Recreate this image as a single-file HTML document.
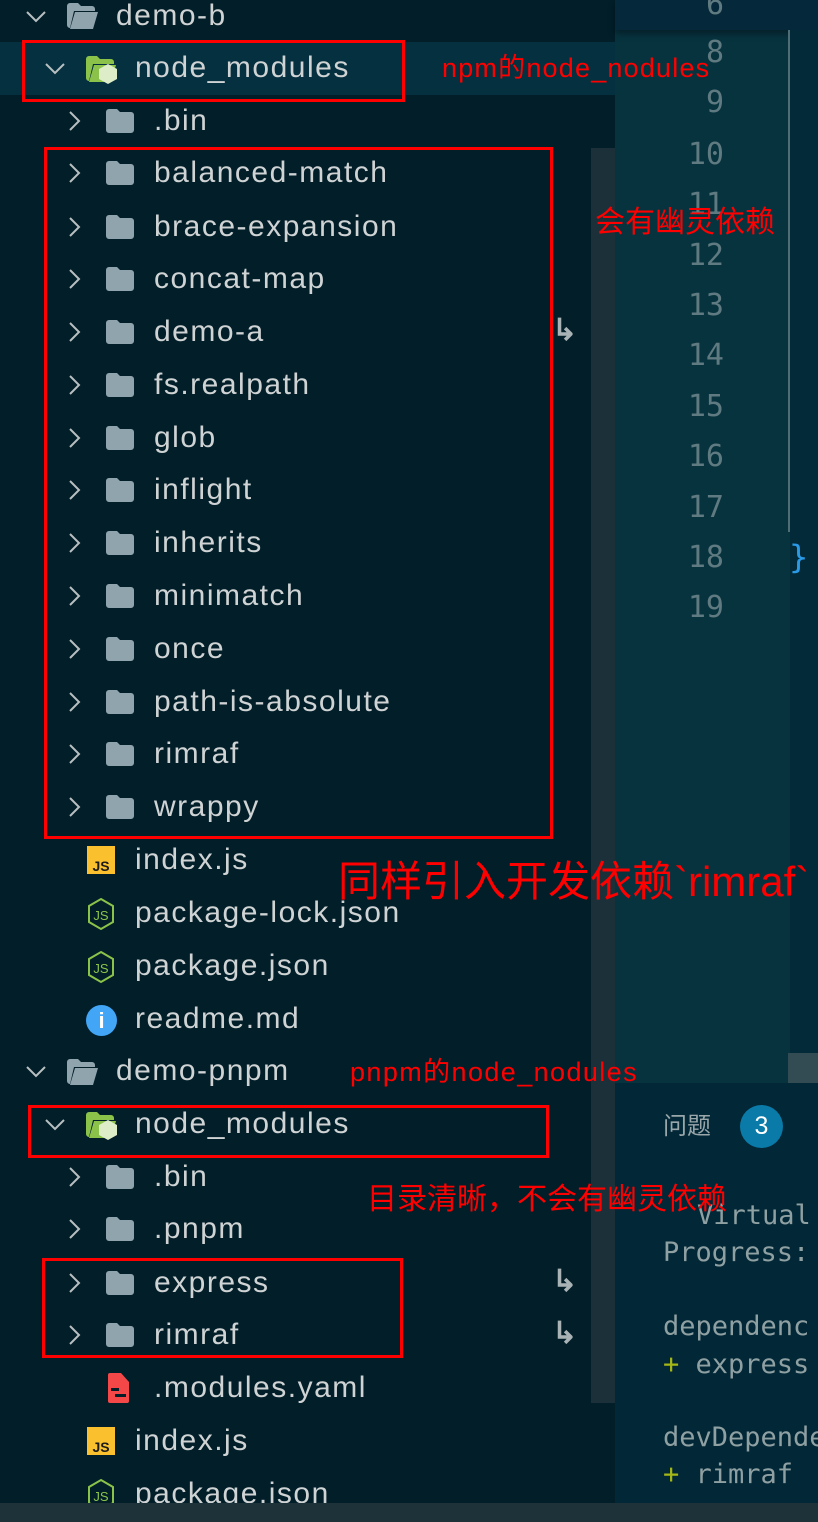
<!DOCTYPE html>
<html><head><meta charset="utf-8"><style>
*{margin:0;padding:0;box-sizing:border-box}
body{width:818px;height:1522px;overflow:hidden;background:#011e29;position:relative;font-family:"Liberation Sans","Noto Sans CJK SC",sans-serif}
.a{position:absolute}
.t{position:absolute;color:#cfd3d4;font-size:30px;letter-spacing:1.5px;line-height:34px;white-space:nowrap}
.r{position:absolute;color:#ff0000;white-space:nowrap;font-family:"Liberation Sans","Noto Sans CJK SC",sans-serif}
.box{position:absolute;border:3px solid #ff0000}
.ln{position:absolute;right:94px;width:80px;text-align:right;color:#5f7a80;font-size:30px;line-height:34px;font-family:"DejaVu Sans Mono","Liberation Mono",monospace}
.term{position:absolute;left:663px;color:#8fa0a3;font-size:27px;line-height:32px;white-space:nowrap;font-family:"DejaVu Sans Mono","Liberation Mono",monospace}
.ar{position:absolute;left:552px;color:#a9b3b5;font-size:30px;line-height:34px;font-weight:bold}
</style></head><body>
<div class="a" style="left:615px;top:0;width:203px;height:1083px;background:#07333f"></div>
<div class="a" style="left:615px;top:0;width:203px;height:30px;background:#05283a;box-shadow:0 4px 6px rgba(0,0,0,.35)"></div>
<div class="a" style="left:790px;top:30px;width:28px;height:1053px;background:#022a38"></div>
<div class="a" style="left:788px;top:30px;width:2px;height:502px;background:#4f6d74"></div>
<div class="a" style="left:788px;top:1053px;width:30px;height:30px;background:#334c53"></div>
<div class="a" style="left:615px;top:1083px;width:203px;height:439px;background:#022736"></div>
<div class="a" style="left:591px;top:148px;width:24px;height:1255px;background:#1b3038"></div>
<div class="a" style="left:0;top:42px;width:615px;height:53px;background:#04303f"></div>

<div class="ln" style="top:-12px">6</div>
<div class="ln" style="top:36px">8</div>
<div class="ln" style="top:86px">9</div>
<div class="ln" style="top:138px">10</div>
<div class="ln" style="top:188px">11</div>
<div class="ln" style="top:239px">12</div>
<div class="ln" style="top:289px">13</div>
<div class="ln" style="top:339px">14</div>
<div class="ln" style="top:390px">15</div>
<div class="ln" style="top:440px">16</div>
<div class="ln" style="top:491px">17</div>
<div class="ln" style="top:541px">18</div>
<div class="ln" style="top:591px">19</div>
<div class="a" style="left:789px;top:537px;color:#2b9ae6;font-size:32px;line-height:40px;font-family:'DejaVu Sans Mono',monospace">}</div>

<div class="a" style="left:663px;top:1110px;color:#9aa7aa;font-size:24px;line-height:34px">问题</div>
<div class="a" style="left:740px;top:1105px;width:43px;height:43px;border-radius:50%;background:#0a7aa8;color:#fff;font-size:25px;line-height:43px;text-align:center">3</div>
<div class="term" style="top:1200px;left:697px">Virtual</div>
<div class="term" style="top:1237px">Progress:</div>
<div class="term" style="top:1311px">dependenc</div>
<div class="term" style="top:1349px"><span style="color:#a5b716">+</span> express</div>
<div class="term" style="top:1422px">devDepende</div>
<div class="term" style="top:1459px"><span style="color:#a5b716">+</span> rimraf</div>

<svg width="0" height="0" style="position:absolute">
<defs>
<symbol id="cr" viewBox="0 0 14 24"><polyline points="3,3 12,12 3,21" fill="none" stroke="#b8bfc1" stroke-width="2"/></symbol>
<symbol id="cd" viewBox="0 0 24 14"><polyline points="3,3 12,12 21,3" fill="none" stroke="#b8bfc1" stroke-width="2"/></symbol>
<symbol id="fc" viewBox="0 0 32 26"><path d="M2 4a3 3 0 0 1 3-3h8l3 3h11a3 3 0 0 1 3 3v15a3 3 0 0 1-3 3H5a3 3 0 0 1-3-3z" fill="#90a4ae"/></symbol>
<symbol id="fo" viewBox="0 0 34 28"><path d="M2 4a3 3 0 0 1 3-3h8l3 3h11a3 3 0 0 1 3 3v2H9l-4 17H5a3 3 0 0 1-3-3z" fill="#90a4ae"/><path d="M10 10h23l-5 17H5z" fill="#90a4ae"/></symbol>
<symbol id="fn" viewBox="0 0 36 30"><path d="M2 4a3 3 0 0 1 3-3h8l3 3h11a3 3 0 0 1 3 3v2H9l-4 17H5a3 3 0 0 1-3-3z" fill="#8bc34a"/><path d="M10 10h22l-5 17H5z" fill="#8bc34a"/><path d="M24 9l9 5v10l-9 5-9-5V14z" fill="#dcedc8"/></symbol>
<symbol id="js" viewBox="0 0 28 28"><rect x="0" y="0" width="28" height="28" fill="#fbc02d"/><text x="14" y="25" font-family="Liberation Sans,sans-serif" font-weight="bold" font-size="14" fill="#1b1b1b" text-anchor="middle">JS</text></symbol>
<symbol id="nj" viewBox="0 0 30 34"><path d="M15 2l12 7v16l-12 7-12-7V9z" fill="none" stroke="#8bc34a" stroke-width="2"/><text x="15" y="23" font-family="Liberation Sans,sans-serif" font-size="13" fill="#8bc34a" text-anchor="middle">JS</text></symbol>
<symbol id="yml" viewBox="0 0 24 32"><path d="M2 3a2 2 0 0 1 2-2h11l8 9v19a2 2 0 0 1-2 2H4a2 2 0 0 1-2-2z" fill="#f44848"/><rect x="5" y="16" width="8" height="3" fill="#011e29"/><rect x="9" y="22" width="11" height="3" fill="#011e29"/></symbol>
</defs></svg>

<svg class="a" style="left:24px;top:9px" width="24" height="14"><use href="#cd"/></svg>
<svg class="a" style="left:65px;top:2px" width="34" height="28"><use href="#fo"/></svg>
<div class="t" style="left:116px;top:-1px">demo-b</div>

<svg class="a" style="left:43px;top:61px" width="24" height="14"><use href="#cd"/></svg>
<svg class="a" style="left:84px;top:55px" width="36" height="30"><use href="#fn"/></svg>
<div class="t" style="left:135px;top:51px">node_modules</div>

<svg class="a" style="left:67px;top:109px" width="14" height="24"><use href="#cr"/></svg>
<svg class="a" style="left:104px;top:108px" width="32" height="26"><use href="#fc"/></svg>
<div class="t" style="left:154px;top:104px">.bin</div>

<svg class="a" style="left:67px;top:161px" width="14" height="24"><use href="#cr"/></svg>
<svg class="a" style="left:104px;top:160px" width="32" height="26"><use href="#fc"/></svg>
<div class="t" style="left:154px;top:156px">balanced-match</div>

<svg class="a" style="left:67px;top:215px" width="14" height="24"><use href="#cr"/></svg>
<svg class="a" style="left:104px;top:214px" width="32" height="26"><use href="#fc"/></svg>
<div class="t" style="left:154px;top:210px">brace-expansion</div>

<svg class="a" style="left:67px;top:267px" width="14" height="24"><use href="#cr"/></svg>
<svg class="a" style="left:104px;top:266px" width="32" height="26"><use href="#fc"/></svg>
<div class="t" style="left:154px;top:262px">concat-map</div>

<svg class="a" style="left:67px;top:320px" width="14" height="24"><use href="#cr"/></svg>
<svg class="a" style="left:104px;top:319px" width="32" height="26"><use href="#fc"/></svg>
<div class="t" style="left:154px;top:315px">demo-a</div>
<div class="ar" style="top:314px">↳</div>

<svg class="a" style="left:67px;top:373px" width="14" height="24"><use href="#cr"/></svg>
<svg class="a" style="left:104px;top:372px" width="32" height="26"><use href="#fc"/></svg>
<div class="t" style="left:154px;top:368px">fs.realpath</div>

<svg class="a" style="left:67px;top:426px" width="14" height="24"><use href="#cr"/></svg>
<svg class="a" style="left:104px;top:425px" width="32" height="26"><use href="#fc"/></svg>
<div class="t" style="left:154px;top:421px">glob</div>

<svg class="a" style="left:67px;top:478px" width="14" height="24"><use href="#cr"/></svg>
<svg class="a" style="left:104px;top:477px" width="32" height="26"><use href="#fc"/></svg>
<div class="t" style="left:154px;top:473px">inflight</div>

<svg class="a" style="left:67px;top:531px" width="14" height="24"><use href="#cr"/></svg>
<svg class="a" style="left:104px;top:530px" width="32" height="26"><use href="#fc"/></svg>
<div class="t" style="left:154px;top:526px">inherits</div>

<svg class="a" style="left:67px;top:584px" width="14" height="24"><use href="#cr"/></svg>
<svg class="a" style="left:104px;top:583px" width="32" height="26"><use href="#fc"/></svg>
<div class="t" style="left:154px;top:579px">minimatch</div>

<svg class="a" style="left:67px;top:637px" width="14" height="24"><use href="#cr"/></svg>
<svg class="a" style="left:104px;top:636px" width="32" height="26"><use href="#fc"/></svg>
<div class="t" style="left:154px;top:632px">once</div>

<svg class="a" style="left:67px;top:690px" width="14" height="24"><use href="#cr"/></svg>
<svg class="a" style="left:104px;top:689px" width="32" height="26"><use href="#fc"/></svg>
<div class="t" style="left:154px;top:685px">path-is-absolute</div>

<svg class="a" style="left:67px;top:742px" width="14" height="24"><use href="#cr"/></svg>
<svg class="a" style="left:104px;top:741px" width="32" height="26"><use href="#fc"/></svg>
<div class="t" style="left:154px;top:737px">rimraf</div>

<svg class="a" style="left:67px;top:795px" width="14" height="24"><use href="#cr"/></svg>
<svg class="a" style="left:104px;top:794px" width="32" height="26"><use href="#fc"/></svg>
<div class="t" style="left:154px;top:790px">wrappy</div>

<svg class="a" style="left:86px;top:846px" width="30" height="28"><use href="#js"/></svg>
<div class="t" style="left:135px;top:843px">index.js</div>
<svg class="a" style="left:85px;top:897px" width="32" height="34"><use href="#nj"/></svg>
<div class="t" style="left:135px;top:896px">package-lock.json</div>
<svg class="a" style="left:85px;top:950px" width="32" height="34"><use href="#nj"/></svg>
<div class="t" style="left:135px;top:949px">package.json</div>
<div class="a" style="left:86px;top:1005px;width:31px;height:31px;border-radius:50%;background:#42a5f5;color:#fff;font-size:22px;line-height:31px;text-align:center;font-weight:bold">i</div>
<div class="t" style="left:135px;top:1002px">readme.md</div>

<svg class="a" style="left:24px;top:1064px" width="24" height="14"><use href="#cd"/></svg>
<svg class="a" style="left:65px;top:1058px" width="34" height="28"><use href="#fo"/></svg>
<div class="t" style="left:116px;top:1054px">demo-pnpm</div>

<svg class="a" style="left:43px;top:1117px" width="24" height="14"><use href="#cd"/></svg>
<svg class="a" style="left:84px;top:1111px" width="36" height="30"><use href="#fn"/></svg>
<div class="t" style="left:135px;top:1107px">node_modules</div>

<svg class="a" style="left:67px;top:1165px" width="14" height="24"><use href="#cr"/></svg>
<svg class="a" style="left:104px;top:1164px" width="32" height="26"><use href="#fc"/></svg>
<div class="t" style="left:154px;top:1160px">.bin</div>

<svg class="a" style="left:67px;top:1217px" width="14" height="24"><use href="#cr"/></svg>
<svg class="a" style="left:104px;top:1216px" width="32" height="26"><use href="#fc"/></svg>
<div class="t" style="left:154px;top:1212px">.pnpm</div>

<svg class="a" style="left:67px;top:1271px" width="14" height="24"><use href="#cr"/></svg>
<svg class="a" style="left:104px;top:1270px" width="32" height="26"><use href="#fc"/></svg>
<div class="t" style="left:154px;top:1266px">express</div>
<div class="ar" style="top:1265px">↳</div>

<svg class="a" style="left:67px;top:1323px" width="14" height="24"><use href="#cr"/></svg>
<svg class="a" style="left:104px;top:1322px" width="32" height="26"><use href="#fc"/></svg>
<div class="t" style="left:154px;top:1318px">rimraf</div>
<div class="ar" style="top:1317px">↳</div>

<svg class="a" style="left:106px;top:1372px" width="24" height="32"><use href="#yml"/></svg>
<div class="t" style="left:154px;top:1371px">.modules.yaml</div>

<svg class="a" style="left:86px;top:1427px" width="30" height="28"><use href="#js"/></svg>
<div class="t" style="left:135px;top:1424px">index.js</div>
<svg class="a" style="left:85px;top:1478px" width="32" height="34"><use href="#nj"/></svg>
<div class="t" style="left:135px;top:1477px">package.json</div>
<div class="a" style="left:0;top:1503px;width:818px;height:19px;background:#1d3239"></div>

<div class="box" style="left:22px;top:40px;width:383px;height:62px"></div>
<div class="box" style="left:44px;top:147px;width:509px;height:692px"></div>
<div class="box" style="left:28px;top:1105px;width:521px;height:53px"></div>
<div class="box" style="left:42px;top:1258px;width:361px;height:100px"></div>
<div class="r" style="left:442px;top:52px;font-size:27px;letter-spacing:1.2px;line-height:32px">npm的node_nodules</div>
<div class="r" style="left:595px;top:205px;font-size:30px;line-height:36px">会有幽灵依赖</div>
<div class="r" style="left:338px;top:858px;font-size:42px;line-height:48px">同样引入开发依赖`rimraf`</div>
<div class="r" style="left:350px;top:1056px;font-size:27px;letter-spacing:1.4px;line-height:32px">pnpm的node_nodules</div>
<div class="r" style="left:367px;top:1182px;font-size:30px;line-height:36px">目录清晰，不会有幽灵依赖</div>
</body></html>
